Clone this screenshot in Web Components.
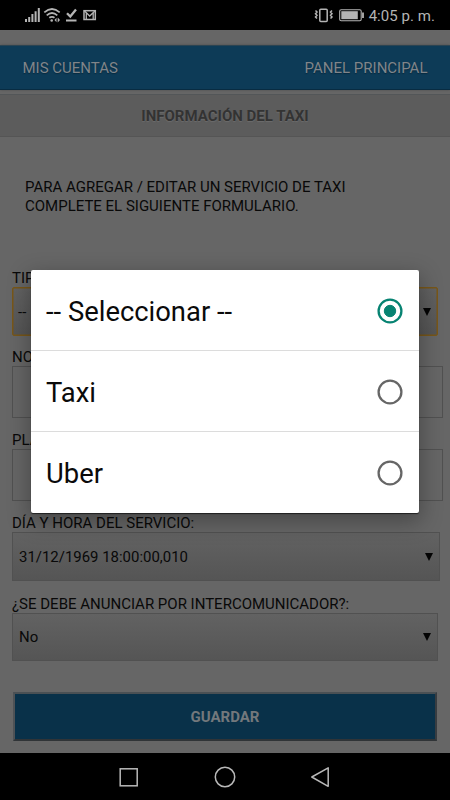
<!DOCTYPE html>
<html lang="es">
<head>
<meta charset="utf-8">
<title>Información del taxi</title>
<style>html,body{margin:0;padding:0;background:#000}</style>
</head>
<body>
<taxi-screen></taxi-screen>
<script>
const define = (name, html) => customElements.define(name, class extends HTMLElement {
  constructor() {
    super();
    const t = document.createElement('template');
    t.innerHTML = html;
    this.attachShadow({mode: 'open'}).append(t.content.cloneNode(true));
  }
});

define('status-bar', `
<style>
:host{display:flex;height:30px;background:#000;color:#b4b4b4;align-items:center;justify-content:space-between;box-sizing:border-box;padding:0 15px 0 24px;font-size:15px}
svg{display:block}
.r{display:flex;align-items:center;gap:4px}
.t{letter-spacing:.05px;line-height:20px;padding-top:1px}
</style>
<svg width="74" height="30" viewBox="24 0 74 30" fill="none" stroke="#b4b4b4">
  <g fill="#b4b4b4" stroke="none"><path d="M25 19h2v3h-2zM28.200 17h2v5h-2zM31.400 14h2v8h-2zM34.600 11.300h2v10.700h-2zM37.800 8h2v14h-2z"/></g>
  <path d="M44.300 12.300Q52 5.700 59.700 12.300M46.700 15.300Q52 10.700 57.300 15.300M49.300 17.800Q52 15.800 54.500 17.700" stroke-width="1.700"/>
  <circle cx="51.700" cy="20.500" r="1.300" fill="#b4b4b4" stroke="none"/>
  <path d="M54.500 20l2-2.200v4.400zM60 20l-2.300-2.500v5z" fill="#b4b4b4" stroke="none"/>
  <path d="M67 13.300l3.300 3.300 5.700-7" stroke-width="2.300"/><path d="M66 20.500h10.500" stroke-width="2"/>
  <rect x="84" y="10.700" width="11.300" height="8.800" stroke-width="1.500"/><path d="M84.500 11l5.200 5 5.200-5M86.300 12.500v7M93.200 12.500v7" stroke-width="1.300"/>
</svg>
<div class="r">
<svg width="51" height="30" viewBox="314 0 51 30" fill="none" stroke="#b4b4b4">
  <rect x="319.800" y="9.200" width="7.400" height="12.300" rx="1" stroke-width="1.500"/>
  <path d="M315.500 10.500l1.500 1.500-1.500 1.700 1.500 1.600-1.500 1.700 1.500 1.600M332 10.500l-1.500 1.500 1.500 1.700-1.500 1.600 1.500 1.700-1.500 1.600" stroke-width="1.500"/>
  <rect x="339.700" y="9.700" width="21.500" height="11" rx="1.500" stroke-width="1.100"/>
  <path d="M341.300 11.200h16.500v8h-16.500z" fill="#b4b4b4" stroke="none"/><path d="M363 12.500v5.500" stroke-width="1.800"/>
</svg><span class="t">4:05 p. m.</span></div>`);

define('app-header', `
<style>
:host{display:flex;justify-content:space-between;align-items:center;box-sizing:border-box;height:45px;margin-top:15px;padding:0 22.500px 0 22.500px;background:#0d3b57;border-top:1px solid #2b4452;border-bottom:1px solid #082c42;box-shadow:0 0 2px #4d4d4d;color:#80858a;font-size:15px;text-shadow:0 1px 1px #082a3f}
</style><slot name="start"></slot><slot name="end"></slot>`);

define('page-title', `
<style>
:host{display:flex;align-items:center;justify-content:center;box-sizing:border-box;height:43px;margin-top:4px;background:#5c5c5c;border-top:1px solid #535658;border-bottom:1px solid #555;color:#333;font-weight:700;font-size:15px;text-shadow:0 1px 1px #6c6c6c}
</style><slot></slot>`);

define('form-field', `
<style>
:host{display:block;width:var(--w,426px);color:#090909}
.label{height:18px;line-height:18px;font-size:15px;white-space:nowrap}
.box{display:flex;align-items:center;justify-content:space-between;box-sizing:border-box;height:var(--h,48px);padding:0 var(--pr,7px) 0 6px;border:1px solid #515151;font-size:14.950px;color:#090909}
:host([kind=select]) .box{background:linear-gradient(#626262,#555)}
:host([focused]) .box{border-radius:2px;border:1.500px solid #785718;box-shadow:inset 0 0 0 .5px #785718;padding-left:5px}
.arrow{display:none;width:0;height:0;border:4px solid transparent;border-top:8px solid #040404;border-bottom:0;margin-right:-1px}
:host([kind=select]) .arrow{display:block}
</style>
<div class="label"><slot name="label"></slot></div>
<div class="box"><slot></slot><span class="arrow"></span></div>`);

define('save-button', `
<style>
:host{display:flex;align-items:center;justify-content:center;box-sizing:border-box;width:424px;height:49px;background:#093149;border:2px solid;border-color:#4a5054 #383c40 #303437 #4e5256;color:#73787c;font-weight:700;font-size:15px}
</style><slot></slot>`);

define('option-row', `
<style>
:host{display:flex;align-items:center;justify-content:space-between;box-sizing:border-box;height:81px;padding:3px 16px 0 15px;color:#0a0a0a;font-size:27.400px}
:host(:not(:last-child)){border-bottom:1px solid #dcdcdc}
svg{display:block;margin-top:-2px}
.dot{display:none}
:host([checked]) .dot{display:block}
circle{stroke:#666}
:host([checked]) circle{stroke:#078372}
</style><slot></slot>
<svg width="26" height="26" viewBox="0 0 26 26"><circle cx="13" cy="13" r="11.400" fill="none" stroke-width="2.300"/><circle class="dot" cx="13" cy="13" r="5.700" fill="#078372"/></svg>`);

define('option-dialog', `
<style>
:host{display:block;position:absolute;left:31px;top:270px;width:388px;height:243px;background:#fff;border-radius:2px;box-shadow:0 1px 1px 0 rgba(0,0,0,.6),0 7px 22px 2px rgba(0,0,0,.3);overflow:hidden}
</style><slot></slot>`);

define('system-nav', `
<style>
:host{display:flex;height:47px;background:#000;align-items:center;justify-content:center;gap:70px}
svg{display:block;fill:none;stroke:#b9b9b9;stroke-width:1.500}
</style>
<svg width="26" height="26"><rect x="4.200" y="4.800" width="17" height="17"/></svg>
<svg width="26" height="26"><circle cx="13" cy="13" r="9.700"/></svg>
<svg width="26" height="26"><path d="M20.200 3.800v18.500L3.800 13z" stroke-linejoin="round"/></svg>`);

define('taxi-screen', `
<style>
:host{display:block;position:relative;width:450px;height:800px;overflow:hidden;font-family:Roboto,sans-serif;background:#666}
.page{display:flow-root;height:723px;background:#666}
.intro{margin:41px 0 0 25px;font-size:15px;line-height:19px;color:#090909}
form{margin:53px 0 0 12px;display:flex;flex-direction:column}
</style>
<status-bar></status-bar>
<div class="page">
  <app-header><span slot="start">MIS CUENTAS</span><span slot="end">PANEL PRINCIPAL</span></app-header>
  <page-title>INFORMACIÓN DEL TAXI</page-title>
  <div class="intro">PARA AGREGAR / EDITAR UN SERVICIO DE TAXI<br>COMPLETE EL SIGUIENTE FORMULARIO.</div>
  <form>
    <form-field kind="select" focused style="--h:49px"><span slot="label">TIPO:</span>--</form-field>
    <form-field style="--w:431px;--h:52px;margin-top:12px"><span slot="label">NOMBRE:</span></form-field>
    <form-field style="--w:431px;--h:52px;margin-top:13px"><span slot="label">PLACAS:</span></form-field>
    <form-field kind="select" style="--w:428px;--h:49px;margin-top:13px"><span slot="label">DÍA Y HORA DEL SERVICIO:</span>31/12/1969 18:00:00,010</form-field>
    <form-field kind="select" style="--h:48px;margin-top:14px"><span slot="label">¿SE DEBE ANUNCIAR POR INTERCOMUNICADOR?:</span>No</form-field>
    <save-button style="margin:31px 0 0 1px">GUARDAR</save-button>
  </form>
</div>
<system-nav></system-nav>
<option-dialog>
  <option-row checked>-- Seleccionar --</option-row>
  <option-row>Taxi</option-row>
  <option-row>Uber</option-row>
</option-dialog>`);
</script>
</body>
</html>
